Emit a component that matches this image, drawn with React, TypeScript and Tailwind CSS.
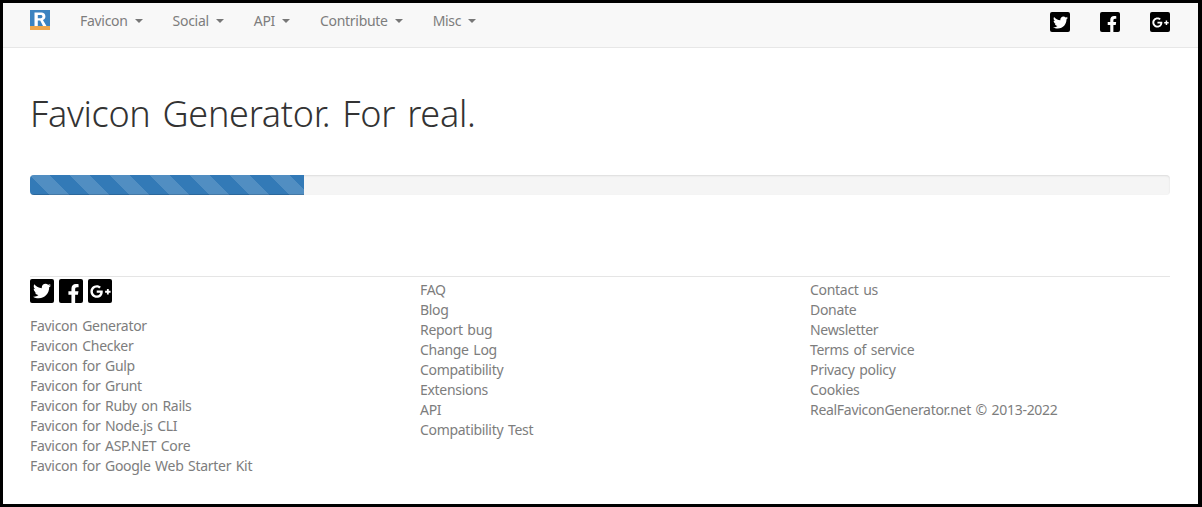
import { FaTwitter, FaFacebookF, FaGooglePlusG } from 'react-icons/fa'
import type { ReactNode } from 'react'

const menus = ['Favicon', 'Social', 'API', 'Contribute', 'Misc']

const col1 = [
  'Favicon Generator',
  'Favicon Checker',
  'Favicon for Gulp',
  'Favicon for Grunt',
  'Favicon for Ruby on Rails',
  'Favicon for Node.js CLI',
  'Favicon for ASP.NET Core',
  'Favicon for Google Web Starter Kit',
]
const col2 = ['FAQ', 'Blog', 'Report bug', 'Change Log', 'Compatibility', 'Extensions', 'API', 'Compatibility Test']
const col3 = [
  'Contact us',
  'Donate',
  'Newsletter',
  'Terms of service',
  'Privacy policy',
  'Cookies',
  'RealFaviconGenerator.net © 2013-2022',
]

function Social({ small, children }: { small?: boolean; children: ReactNode }) {
  return (
    <a className={small ? 'flex h-5 w-5 items-center justify-center overflow-hidden rounded-[2px] bg-black text-white' : 'flex h-6 w-6 items-center justify-center overflow-hidden rounded-[2px] bg-black text-white'}>
      {children}
    </a>
  )
}

function Icons({ small }: { small?: boolean }) {
  return (
    <>
      <Social small={small}><FaTwitter size={small ? 15 : 18} /></Social>
      <Social small={small}><FaFacebookF size={small ? 16 : 19} className="mt-1 ml-1" /></Social>
      <Social small={small}><FaGooglePlusG size={small ? 17 : 21} /></Social>
    </>
  )
}

function Logo() {
  return (
    <svg width="20" height="20" viewBox="0 0 20 20">
      <rect width="20" height="20" fill="#3b83c0" />
      <rect y="16" width="20" height="4" fill="#eea64a" />
      <path d="M4.500 2.500h6.700c2.600 0 4.200 1.500 4.200 3.900 0 1.800-1 3-2.500 3.600L16.500 16h-3.500l-2.800-5.500H7.800V16H4.500zM7.800 5v3.200h3c1 0 1.600-.6 1.600-1.600S11.800 5 10.800 5z" fill="#fff" />
    </svg>
  )
}

function LinkList({ items }: { items: string[] }) {
  return (
    <ul className="leading-5">
      {items.map((t) => (
        <li key={t}>{t}</li>
      ))}
    </ul>
  )
}

export default function App() {
  return (
    <div className="h-[507px] w-[1202px] border-t-[3px] border-r-[4px] border-b-[3px] border-l-[3px] border-black bg-white font-['Noto_Sans',sans-serif] text-sm tracking-[-0.3px] [word-spacing:1.3px] text-[#7d7d7d]">
      <nav className="flex h-[45px] items-start border-b border-[#e7e7e7] bg-[#f8f8f8] pr-[28px] pl-[27px]">
        <div className="mt-[7px]"><Logo /></div>
        <ul className="mt-[8px] ml-[15px] flex">
          {menus.map((m) => (
            <li key={m} className="flex items-center px-[15px] leading-5">
              {m}
              <span className="ml-[7px] h-0 w-0 border-x-4 border-t-4 border-x-transparent border-t-[#777]" />
            </li>
          ))}
        </ul>
        <div className="mt-[9px] ml-auto flex gap-[30px]">
          <Icons small />
        </div>
      </nav>

      <main className="pr-[28px] pl-[27px]">
        <h1 className="mt-[46px] text-[36px] leading-[40px] font-light tracking-[-0.3px] [word-spacing:3px] text-[#333]">Favicon Generator. For real.</h1>

        <div className="mt-[41px] h-5 overflow-hidden rounded bg-[#f5f5f5] shadow-[inset_0_1px_2px_rgba(0,0,0,0.1)]">
          <div className="h-full w-[24%] bg-[#337ab7] bg-[linear-gradient(45deg,rgba(255,255,255,0.15)_25%,transparent_25%,transparent_50%,rgba(255,255,255,0.15)_50%,rgba(255,255,255,0.15)_75%,transparent_75%,transparent)] bg-size-[40px_40px] shadow-[inset_0_-1px_0_rgba(0,0,0,0.15)]" />
        </div>

        <footer className="mt-[81px] border-t border-[#e5e5e5]">
          <div className="grid grid-cols-[390px_390px_1fr]">
            <div>
              <div className="mt-[2px] flex gap-[5px]">
                <Icons />
              </div>
              <div className="mt-[13px]">
                <LinkList items={col1} />
              </div>
            </div>
            <div className="pt-[3px]">
              <LinkList items={col2} />
            </div>
            <div className="pt-[3px]">
              <LinkList items={col3} />
            </div>
          </div>
        </footer>
      </main>
    </div>
  )
}
